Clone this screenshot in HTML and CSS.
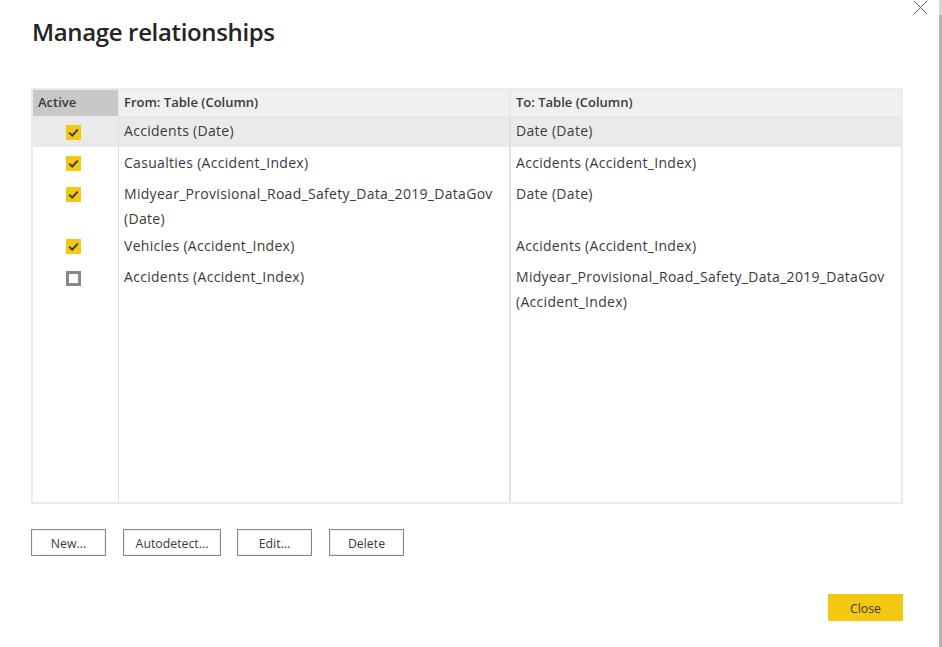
FILE: index.html
```html
<!DOCTYPE html>
<html lang="en">
<head>
<meta charset="utf-8">
<title>Manage relationships</title>
<link rel="stylesheet" href="styles.css">
</head>
<body>
<div class="dialog">
  <button class="dismiss" aria-label="Close dialog">
    <svg width="15" height="15" viewBox="0 0 15 15"><path d="M1 1 14 14M14 1 1 14" fill="none" stroke="#605e5c" stroke-width="1"/></svg>
  </button>
  <h1 class="title">Manage relationships</h1>
  <div class="table">
    <div class="row head">
      <div class="cell c-active">Active</div>
      <div class="cell c-from">From: Table (Column)</div>
      <div class="cell c-to">To: Table (Column)</div>
    </div>
    <div class="row selected">
      <div class="cell c-active"><span class="box on"><svg width="15" height="15" viewBox="0 0 15 15"><path d="M3.2 7.6 6.2 10.6 11.8 4.6" fill="none" stroke="#3b3a39" stroke-width="2"/></svg></span></div>
      <div class="cell c-from">Accidents (Date)</div>
      <div class="cell c-to">Date (Date)</div>
    </div>
    <div class="row">
      <div class="cell c-active"><span class="box on"><svg width="15" height="15" viewBox="0 0 15 15"><path d="M3.2 7.6 6.2 10.6 11.8 4.6" fill="none" stroke="#3b3a39" stroke-width="2"/></svg></span></div>
      <div class="cell c-from">Casualties (Accident_Index)</div>
      <div class="cell c-to">Accidents (Accident_Index)</div>
    </div>
    <div class="row double">
      <div class="cell c-active"><span class="box on"><svg width="15" height="15" viewBox="0 0 15 15"><path d="M3.2 7.6 6.2 10.6 11.8 4.6" fill="none" stroke="#3b3a39" stroke-width="2"/></svg></span></div>
      <div class="cell c-from">Midyear_Provisional_Road_Safety_Data_2019_DataGov (Date)</div>
      <div class="cell c-to">Date (Date)</div>
    </div>
    <div class="row">
      <div class="cell c-active"><span class="box on"><svg width="15" height="15" viewBox="0 0 15 15"><path d="M3.2 7.6 6.2 10.6 11.8 4.6" fill="none" stroke="#3b3a39" stroke-width="2"/></svg></span></div>
      <div class="cell c-from">Vehicles (Accident_Index)</div>
      <div class="cell c-to">Accidents (Accident_Index)</div>
    </div>
    <div class="row grow">
      <div class="cell c-active"><span class="box off"></span></div>
      <div class="cell c-from">Accidents (Accident_Index)</div>
      <div class="cell c-to">Midyear_Provisional_Road_Safety_Data_2019_DataGov (Accident_Index)</div>
    </div>
  </div>
  <div class="actions">
    <button class="btn b-new">New...</button>
    <button class="btn b-auto">Autodetect...</button>
    <button class="btn b-edit">Edit...</button>
    <button class="btn b-del">Delete</button>
  </div>
  <div class="footer"><button class="primary">Close</button></div>
</div>
</body>
</html>
```
FILE: styles.css
```css
* { box-sizing: border-box; }
html, body { margin: 0; height: 100%; background: #fff; }
body { overflow: hidden; font-family: "Open Sans", "Liberation Sans", sans-serif; color: #3b3a39; }
.dialog { position: relative; width: 942px; height: 647px; padding: 16px 39px 0 31px; border-right: 3px solid #b4b4b4; }
.dialog::after { content: ""; position: absolute; top: 0; right: -3px; width: 3px; height: 15px; background: #d6d6d6; }
.dismiss { position: absolute; top: 0; left: 913px; padding: 0; width: 15px; height: 15px; border: 0; background: none; display: flex; }
.title { margin: 0 0 0 1px; font-size: 24px; line-height: 32px; font-weight: 600; color: #252423; letter-spacing: -0.35px; }
.table { margin-top: 40px; height: 416px; width: 872px; border: 2px solid #ebebeb; display: flex; flex-direction: column; font-size: 14px; letter-spacing: 0.3px; }
.row { display: flex; min-height: 31px; }
.cell { padding: 3px 5px 0; line-height: 25px; }
.c-active { width: 86px; border-right: 1px solid #e1e1e1; }
.c-from { width: 392px; border-right: 2px solid #e1e1e1; padding-right: 10px; }
.c-to { flex: 1; padding-right: 10px; }
.head { min-height: 26px; background: #f0f0f0; font-weight: 600; font-size: 13px; letter-spacing: 0; }
.head .cell { padding-top: 0; border-right-color: #e8e8e8; }
.head .c-active { background: #c8c8c8; }
.selected { background: #eaeaea; }
.selected .cell { padding-top: 2px; }
.double { height: 52px; }
.grow { flex: 1; }
.box { display: block; width: 15px; height: 15px; margin: 6px 0 0 28px; }
.selected .box { margin-top: 7px; }
.box svg { display: block; }
.on { background: #f2c811; }
.off { border: 3px solid #8a8886; background: #fff; margin-top: 7px; }
.actions { display: flex; margin-top: 25px; }
.btn { height: 27px; padding: 1px 0 0; border: 1px solid #8a8886; box-shadow: inset 0 0 0 1px #f0f0f0; background: #fff; font: inherit; font-size: 12.3px; color: #3b3a39; }
.b-new { width: 75px; margin-right: 17px; }
.b-auto { width: 98px; margin-right: 16px; }
.b-edit { width: 75px; margin-right: 17px; }
.b-del { width: 75px; }
.footer { display: flex; justify-content: flex-end; margin-top: 38px; width: 872px; }
.primary { width: 75px; height: 27px; padding: 1px 0 0; border: 0; background: #f2c811; font: inherit; font-size: 12.3px; color: #3b3a39; }
```
